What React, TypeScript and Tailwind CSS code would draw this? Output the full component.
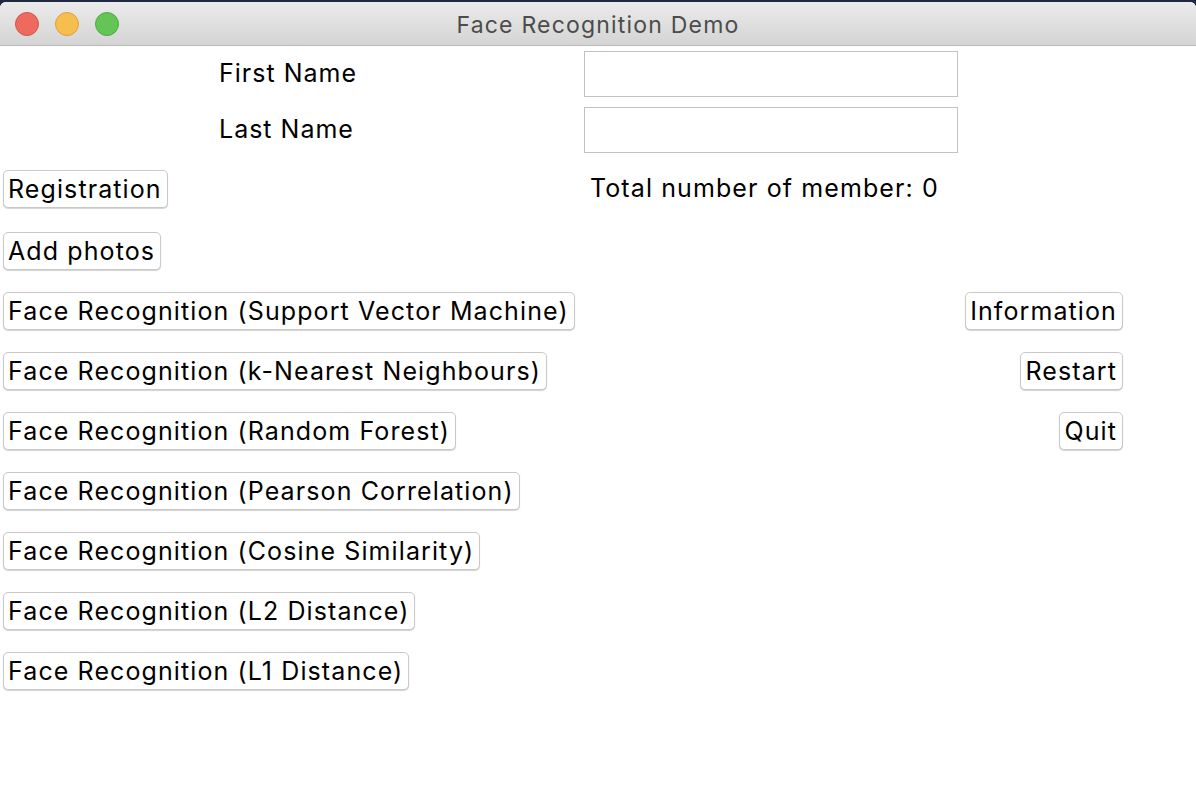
import type { ReactNode } from "react";

const leftButtons = [
  "Face Recognition (Support Vector Machine)",
  "Face Recognition (k-Nearest Neighbours)",
  "Face Recognition (Random Forest)",
  "Face Recognition (Pearson Correlation)",
  "Face Recognition (Cosine Similarity)",
  "Face Recognition (L2 Distance)",
  "Face Recognition (L1 Distance)",
];

const rightButtons = ["Information", "Restart", "Quit"];

function MacButton({ children }: { children: ReactNode }) {
  return (
    <button
      type="button"
      className="flex h-[38px] items-center rounded-[5px] border border-[#c9c9c9] bg-white pl-[4px] pr-[5px] text-[25px] leading-none tracking-[1.1px] text-black shadow-[0_1px_1px_rgba(0,0,0,0.18)]"
    >
      {children}
    </button>
  );
}

function TrafficLight({ color, ring }: { color: string; ring: string }) {
  return <span className={`h-[24px] w-[24px] rounded-full border ${color} ${ring}`} />;
}

export default function App() {
  return (
    <div
      className="h-[789px] w-[1196px] overflow-hidden bg-[#1d2a42] pt-[2px]"
      style={{ fontFamily: "Inter, 'Liberation Sans', sans-serif" }}
    >
      <div className="flex h-full flex-col overflow-hidden rounded-t-[6px] bg-white">
        <header className="relative flex h-[44px] shrink-0 items-center border-b border-[#b9b9b9] bg-gradient-to-b from-[#ebebeb] to-[#d4d4d4]">
          <div className="flex items-center gap-[16px] pl-[15px]">
            <TrafficLight color="bg-[#ee6a5f]" ring="border-[#d9534a]" />
            <TrafficLight color="bg-[#f5be4f]" ring="border-[#dea236]" />
            <TrafficLight color="bg-[#62c554]" ring="border-[#4eac40]" />
          </div>
          <h1 className="absolute inset-x-0 pt-[3px] text-center text-[23px] font-normal tracking-[1.2px] text-[#4c4c4c]">
            Face Recognition Demo
          </h1>
        </header>

        <main className="flex flex-col text-black">
          <div className="mt-[5px] flex items-center">
            <span className="w-[584px] pl-[219px] text-[25px] tracking-[1px]">First Name</span>
            <input className="h-[46px] w-[374px] border border-[#c2c2c2] outline-none" />
          </div>
          <div className="mt-[10px] flex items-center">
            <span className="w-[584px] pl-[219px] text-[25px] tracking-[1px]">Last Name</span>
            <input className="h-[46px] w-[374px] border border-[#c2c2c2] outline-none" />
          </div>

          <div className="mt-[17px] flex items-center pl-[3px]">
            <div className="w-[587px]">
              <div className="inline-flex">
                <MacButton>Registration</MacButton>
              </div>
            </div>
            <span className="text-[25px] tracking-[1.1px]">Total number of member: 0</span>
          </div>

          <div className="mt-[24px] flex pl-[3px]">
            <MacButton>Add photos</MacButton>
          </div>

          <div className="mt-[22px] flex flex-col gap-[22px] pl-[3px] pr-[73px]">
            {leftButtons.map((label, i) => (
              <div key={label} className="flex items-center justify-between">
                <MacButton>{label}</MacButton>
                {rightButtons[i] ? <MacButton>{rightButtons[i]}</MacButton> : null}
              </div>
            ))}
          </div>
        </main>
      </div>
    </div>
  );
}
